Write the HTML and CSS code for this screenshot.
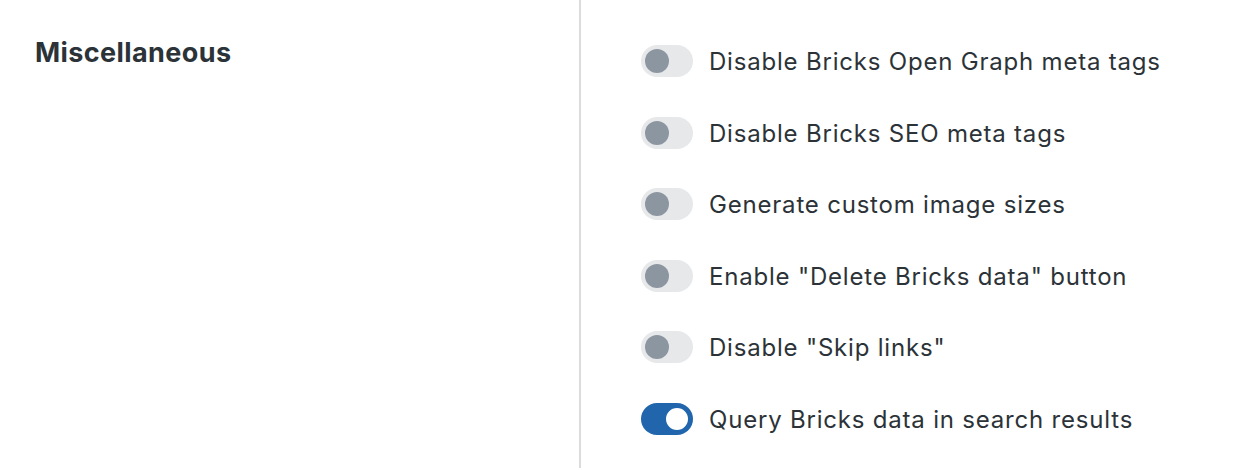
FILE: index.html
```html
<!DOCTYPE html>
<html>
<head>
<meta charset="utf-8">
<link rel="stylesheet" href="styles.css">
</head>
<body>
<div class="section">
  <div class="label-col">
    <h2 class="title">Miscellaneous</h2>
  </div>
  <div class="options">
    <label class="row"><span class="toggle"><span class="knob"></span></span><span class="text">Disable Bricks Open Graph meta tags</span></label>
    <label class="row"><span class="toggle"><span class="knob"></span></span><span class="text">Disable Bricks SEO meta tags</span></label>
    <label class="row"><span class="toggle"><span class="knob"></span></span><span class="text">Generate custom image sizes</span></label>
    <label class="row"><span class="toggle"><span class="knob"></span></span><span class="text">Enable "Delete Bricks data" button</span></label>
    <label class="row"><span class="toggle"><span class="knob"></span></span><span class="text">Disable "Skip links"</span></label>
    <label class="row"><span class="toggle on"><span class="knob"></span></span><span class="text">Query Bricks data in search results</span></label>
  </div>
</div>
</body>
</html>
```
FILE: styles.css
```css
html, body {
  margin: 0;
  padding: 0;
  background: #ffffff;
}
body {
  font-family: Inter, "Noto Sans", sans-serif;
  color: #2c3338;
}
.section {
  display: grid;
  grid-template-columns: 581px 1fr;
  height: 468px;
}
.label-col {
  border-right: 2px solid #dcdcde;
  padding: 37px 0 0 35px;
}
.title {
  margin: 0;
  font-size: 27px;
  font-weight: 700;
  line-height: 32px;
  letter-spacing: 0.4px;
  color: #2c3338;
}
.options {
  padding: 45px 0 0 60px;
  display: flex;
  flex-direction: column;
  gap: 39.6px;
}
.row {
  display: flex;
  align-items: center;
  height: 32px;
  gap: 16px;
}
.toggle {
  width: 52px;
  height: 32px;
  border-radius: 16px;
  background: #e7e8ea;
  box-sizing: border-box;
  padding: 4px;
  display: flex;
  align-items: center;
  flex-shrink: 0;
}
.knob {
  width: 24px;
  height: 24px;
  border-radius: 50%;
  background: #8c96a1;
}
.toggle.on {
  background: #2166ad;
  justify-content: flex-end;
  padding: 3px;
}
.toggle.on .knob {
  width: 26px;
  height: 26px;
  background: #ffffff;
  box-sizing: border-box;
  border: 2px solid #2166ad;
}
.text {
  font-size: 24px;
  letter-spacing: 0.8px;
  line-height: 32px;
  position: relative;
  top: 1px;
}
```
